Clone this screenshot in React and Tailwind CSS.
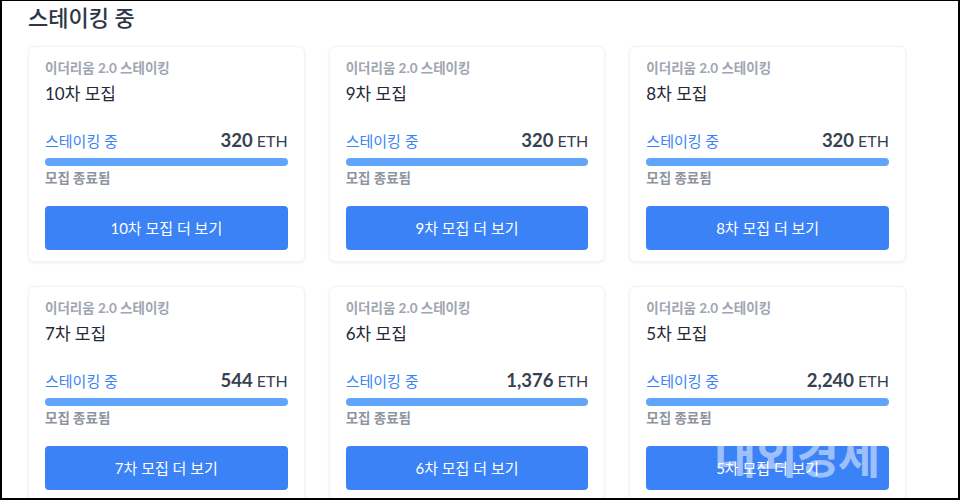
import React from 'react';

const rounds = [
  { no: 10, amount: '320' },
  { no: 9, amount: '320' },
  { no: 8, amount: '320' },
  { no: 7, amount: '544' },
  { no: 6, amount: '1,376' },
  { no: 5, amount: '2,240' },
];

const StakingCard = ({ round }) => {
  return (
    <div className="bg-white rounded-md border border-[#f3f4f6] shadow-[0_1px_3px_rgba(0,0,0,0.07)] px-4 pt-[13px] pb-[11px]">
      <div className="text-[13.5px] leading-[16px] font-bold text-[#a0a5b1]">이더리움 2.0 스테이킹</div>
      <div className="mt-[6px] text-[17px] leading-[24px] text-[#1f2937]">{round.no}차 모집</div>

      {/* 진행 상태 */}
      <div className="mt-[22px] flex items-center justify-between leading-[24px]">
        <span className="text-[15px] text-[#3b82f6]">스테이킹 중</span>
        <span className="text-[#374151]">
          <span className="text-[18.5px] font-bold">{round.amount}</span>
          <span className="text-[16px] ml-1">ETH</span>
        </span>
      </div>
      <div className="mt-[5px] h-2 rounded-full bg-[#60a5fa]"></div>
      <div className="mt-[3px] text-[13.5px] leading-[18px] font-bold text-[#8e939c]">모집 종료됨</div>

      <button className="mt-[19px] w-full h-11 rounded bg-[#3b82f6] text-white text-[15px]">
        {round.no}차 모집 더 보기
      </button>
    </div>
  );
};

export default function App() {
  return (
    <div
      className="relative h-[500px] overflow-hidden bg-white border-t border-l-2 border-r-2 border-b-2 border-black"
      style={{ fontFamily: "Lato, 'Noto Sans CJK KR', sans-serif" }}
    >
      <div className="pl-[26px] pt-[3px] w-[904px]">
        <h2 className="text-[22px] leading-[28px] font-medium text-[#2d3748]">스테이킹 중</h2>
        <div className="mt-[14px] grid grid-cols-3 gap-6">
          {rounds.map((r) => (
            <StakingCard key={r.no} round={r} />
          ))}
        </div>
      </div>

      {/* 워터마크 */}
      <div className="absolute left-[712px] top-[427px] text-[46px] leading-[56px] font-bold tracking-[-1px] text-white/50 pointer-events-none">
        내외경제
      </div>
    </div>
  );
}
